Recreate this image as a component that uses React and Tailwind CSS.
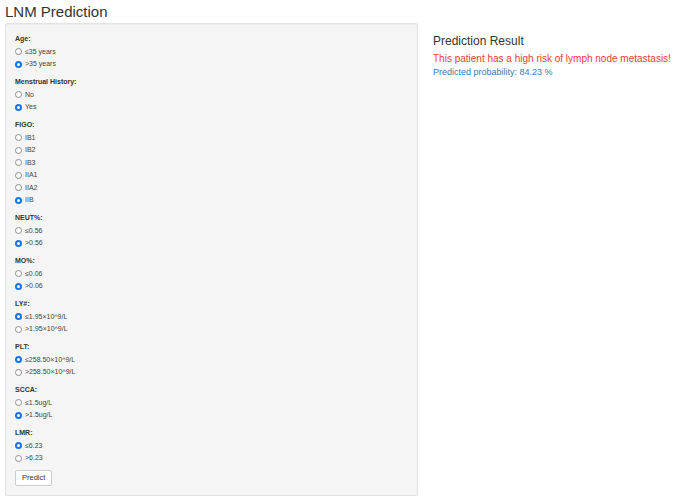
import React from "react";

const groups = [
  { label: "Age:", options: ["≤35 years", ">35 years"], checked: 1 },
  { label: "Menstrual History:", options: ["No", "Yes"], checked: 1 },
  { label: "FIGO:", options: ["IB1", "IB2", "IB3", "IIA1", "IIA2", "IIB"], checked: 5 },
  { label: "NEUT%:", options: ["≤0.56", ">0.56"], checked: 1 },
  { label: "MO%:", options: ["≤0.06", ">0.06"], checked: 1 },
  { label: "LY#:", options: ["≤1.95×10^9/L", ">1.95×10^9/L"], checked: 0 },
  { label: "PLT:", options: ["≤258.50×10^9/L", ">258.50×10^9/L"], checked: 0 },
  { label: "SCCA:", options: ["≤1.5ug/L", ">1.5ug/L"], checked: 1 },
  { label: "LMR:", options: ["≤6.23", ">6.23"], checked: 0 },
];

function Radio({ checked }) {
  if (checked) {
    return (
      <span className="flex h-[7px] w-[7px] items-center justify-center rounded-full bg-[#1a73e8]">
        <span className="h-[3px] w-[3px] rounded-full bg-white" />
      </span>
    );
  }
  return <span className="h-[7px] w-[7px] rounded-full border border-[#8f8f8f] bg-white" />;
}

function RadioGroup({ label, options, checked }) {
  return (
    <div className="mb-[5px]">
      <div className="flex h-[13px] items-center text-[7px] font-bold text-[#333]">{label}</div>
      {options.map((opt, i) => (
        <div key={opt} className="flex h-[12.5px] items-center gap-[3px] text-[7px] text-[#444]">
          <Radio checked={i === checked} />
          <span>{opt}</span>
        </div>
      ))}
    </div>
  );
}

export default function App() {
  return (
    <div className="min-h-[502px] bg-white px-[5px] font-['Liberation_Sans',Arial,sans-serif] text-[#333]">
      <h2 className="flex h-[22px] items-center text-[15px] leading-none">LNM Prediction</h2>
      <div className="mt-[1px] flex items-start gap-[15px]">
        <div className="w-[413px] rounded-[2px] border border-[#e3e3e3] bg-[#f5f5f5] px-[9px] pb-[9.5px] pt-[8.5px] shadow-[inset_0_1px_1px_rgba(0,0,0,0.05)]">
          {groups.map((g) => (
            <RadioGroup key={g.label} {...g} />
          ))}
          <button className="mt-[1px] block h-[16px] rounded-[2px] border border-[#ccc] bg-white px-[6px] text-[7.5px] leading-none text-[#333]">
            Predict
          </button>
        </div>
        <div className="flex flex-col pt-[9px]">
          <h3 className="flex h-[17px] items-center text-[12px] leading-none">Prediction Result</h3>
          <div className="mt-[3px] text-[10px] leading-[13px] text-[#f03c3c]">
            This patient has a high risk of lymph node metastasis!
          </div>
          <div className="mt-[1px] text-[9px] leading-[13px] text-[#337ab7]">Predicted probability: 84.23 %</div>
        </div>
      </div>
    </div>
  );
}
